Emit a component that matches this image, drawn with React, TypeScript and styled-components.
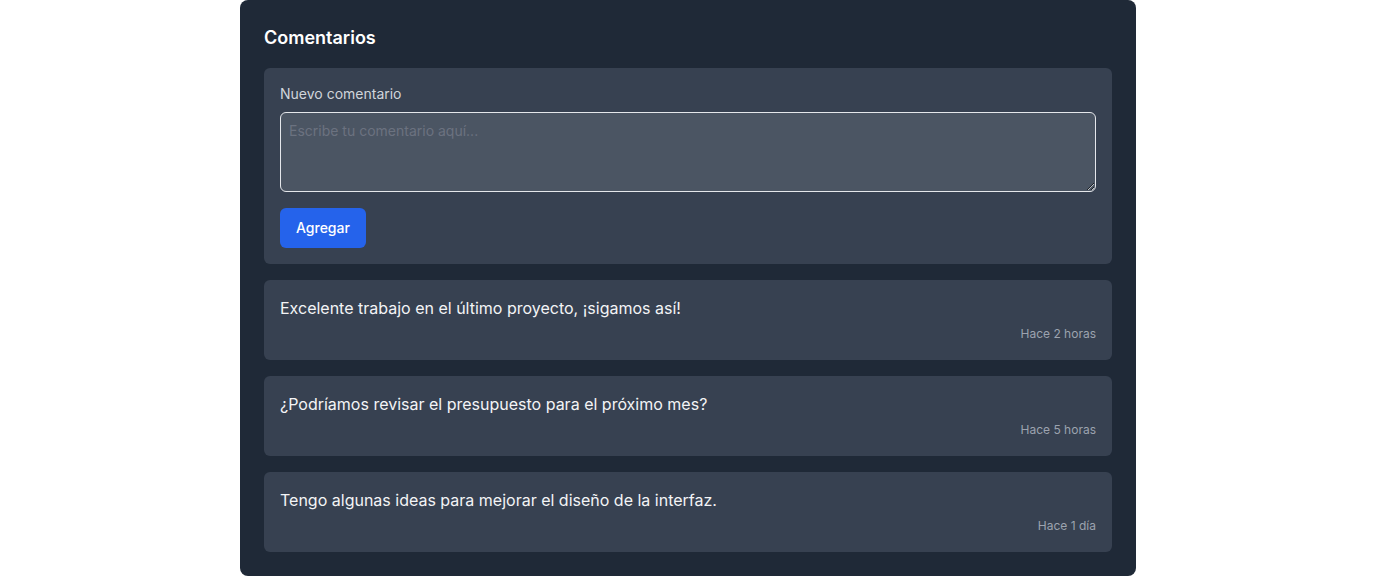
import React from "react";
import styled, { createGlobalStyle } from "styled-components";

const Global = createGlobalStyle`
  * { box-sizing: border-box; }
  body { margin: 0; background: #ffffff; font-family: Inter, "Noto Sans", sans-serif; }
`;

const Panel = styled.section`
  width: 896px;
  margin: 0 auto;
  background: #1f2937;
  border-radius: 8px;
  padding: 24px;
  display: flex;
  flex-direction: column;
  gap: 16px;
`;

const Title = styled.h2`
  margin: 0;
  font-size: 18px;
  line-height: 28px;
  font-weight: 600;
  color: #ffffff;
`;

const Card = styled.div<{ $comment?: boolean }>`
  background: #374151;
  border-radius: 6px;
  padding: ${(p) => (p.$comment ? "16px 16px 18px" : "16px")};
  display: flex;
  flex-direction: column;
`;

const Label = styled.label`
  font-size: 14px;
  line-height: 20px;
  color: #d1d5db;
  margin-bottom: 8px;
`;

const TextArea = styled.textarea`
  display: block;
  width: 100%;
  height: 80px;
  background: #4b5563;
  border: 1px solid #e5e7eb;
  border-radius: 6px;
  padding: 8px;
  font-family: inherit;
  font-size: 14px;
  line-height: 20px;
  color: #f3f4f6;
  outline: none;
  &::placeholder { color: #6b7280; }
`;

const Button = styled.button`
  align-self: flex-start;
  margin-top: 16px;
  background: #2563eb;
  color: #ffffff;
  border: none;
  border-radius: 6px;
  padding: 8px 16px;
  font-family: inherit;
  font-size: 14px;
  line-height: 24px;
  font-weight: 500;
  cursor: pointer;
`;

const CommentText = styled.p`
  margin: 0;
  font-size: 16px;
  line-height: 24px;
  color: #f3f4f6;
`;

const Time = styled.span`
  margin-top: 6px;
  align-self: flex-end;
  font-size: 12px;
  line-height: 16px;
  color: #9ca3af;
`;

const comments = [
  { text: "Excelente trabajo en el último proyecto, ¡sigamos así!", time: "Hace 2 horas" },
  { text: "¿Podríamos revisar el presupuesto para el próximo mes?", time: "Hace 5 horas" },
  { text: "Tengo algunas ideas para mejorar el diseño de la interfaz.", time: "Hace 1 día" },
];

export default function App() {
  return (
    <>
      <Global />
      <Panel>
        <Title>Comentarios</Title>
        <Card>
          <Label htmlFor="nc">Nuevo comentario</Label>
          <TextArea id="nc" placeholder="Escribe tu comentario aquí..." />
          <Button>Agregar</Button>
        </Card>
        {comments.map((c) => (
          <Card $comment key={c.time}>
            <CommentText>{c.text}</CommentText>
            <Time>{c.time}</Time>
          </Card>
        ))}
      </Panel>
    </>
  );
}
